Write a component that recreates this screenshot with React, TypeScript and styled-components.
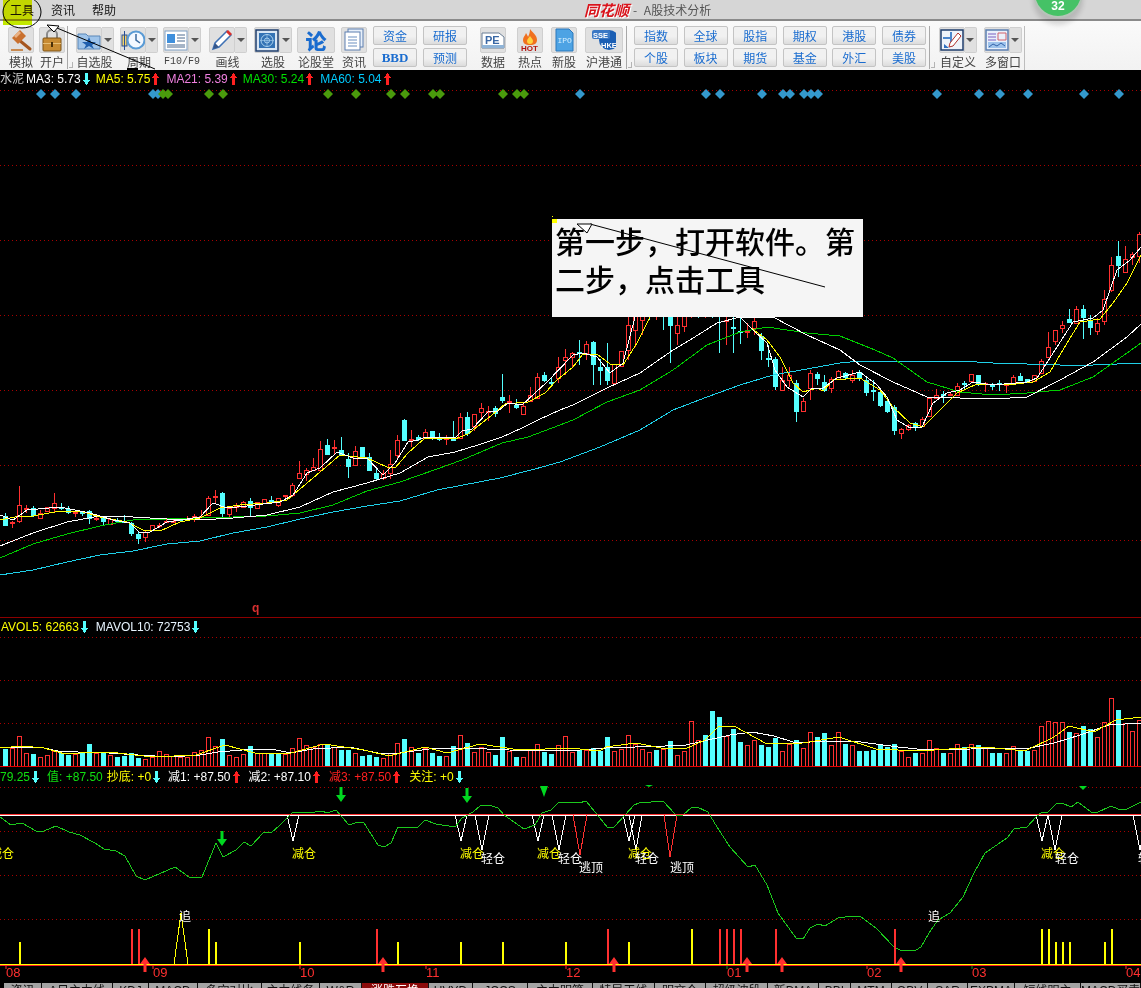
import React from "react";
import styled, {createGlobalStyle} from "styled-components";

const RED = "#ff3030";
const CYAN = "#54ffff";
const YELLOW = "#ffff00";
const SANS = `"Liberation Sans", Arial, sans-serif`;
const CJK = `"Noto Sans CJK SC", "Liberation Sans", sans-serif`;

type Candle = [0 | 1, number, number, number, number];

// red = 1, cyan = 0: wick top, body top, body bottom, wick bottom (page y)
const candles: Candle[] = [
    [0, 513, 516, 526, 526], [1, 521, 522, 524, 528], [1, 486, 505, 521, 523], [1, 505, 508, 510, 513], [0, 506, 508, 516, 517],
    [1, 510, 513, 518, 518], [1, 507, 507, 511, 511], [1, 493, 503, 508, 512], [0, 503, 507, 508, 510], [0, 506, 509, 513, 514],
    [1, 510, 512, 513, 517], [0, 511, 512, 514, 516], [0, 510, 511, 519, 524], [1, 517, 518, 519, 521], [0, 517, 518, 522, 525],
    [1, 519, 519, 524, 524], [0, 518, 520, 521, 522], [0, 515, 521, 522, 522], [0, 522, 523, 534, 536], [0, 532, 534, 539, 544],
    [1, 530, 532, 537, 542], [1, 525, 525, 530, 530], [1, 523, 525, 526, 528], [1, 518, 521, 522, 523], [1, 519, 521, 522, 523],
    [0, 519, 519, 521, 521], [1, 516, 518, 519, 520], [1, 514, 516, 519, 522], [1, 510, 516, 517, 518], [1, 496, 498, 515, 516],
    [1, 490, 496, 497, 504], [0, 492, 493, 514, 517], [1, 506, 508, 514, 519], [1, 503, 506, 508, 512], [1, 501, 502, 507, 508],
    [0, 498, 501, 508, 517], [1, 502, 502, 508, 508], [1, 499, 499, 503, 503], [0, 496, 500, 503, 504], [1, 498, 498, 505, 507],
    [1, 495, 495, 497, 499], [1, 483, 485, 495, 497], [1, 461, 473, 478, 478], [1, 468, 470, 474, 481], [1, 458, 467, 470, 470],
    [1, 441, 449, 470, 472], [0, 439, 445, 455, 455], [1, 440, 447, 449, 455], [0, 437, 450, 455, 455], [0, 453, 459, 467, 478],
    [1, 446, 451, 465, 465], [0, 447, 447, 459, 459], [0, 453, 457, 471, 471], [0, 469, 473, 479, 481], [1, 470, 473, 478, 480],
    [1, 450, 464, 473, 479], [1, 435, 440, 455, 460], [0, 419, 420, 441, 441], [1, 430, 439, 440, 447], [0, 435, 437, 440, 441],
    [1, 429, 432, 438, 439], [0, 431, 431, 439, 440], [0, 433, 438, 440, 441], [1, 435, 438, 439, 445], [0, 421, 437, 441, 441],
    [1, 413, 417, 438, 438], [0, 412, 417, 434, 436], [1, 414, 414, 426, 431], [1, 403, 408, 412, 420], [1, 406, 411, 412, 421],
    [0, 406, 408, 414, 417], [0, 374, 397, 401, 403], [1, 395, 401, 402, 413], [0, 399, 405, 408, 409], [1, 403, 406, 414, 414],
    [1, 387, 395, 401, 401], [1, 373, 377, 398, 399], [0, 372, 375, 381, 382], [0, 377, 382, 383, 387], [1, 357, 367, 378, 383],
    [1, 349, 357, 360, 375], [1, 352, 353, 357, 367], [0, 340, 352, 353, 365], [1, 341, 344, 353, 360], [0, 341, 342, 365, 385],
    [0, 359, 367, 371, 385], [0, 343, 367, 381, 385], [1, 364, 364, 383, 383], [1, 351, 351, 366, 366], [1, 317, 325, 350, 360],
    [1, 300, 305, 330, 347], [1, 290, 295, 320, 335], [0, 285, 290, 300, 320], [1, 280, 285, 305, 320], [0, 285, 290, 310, 330],
    [0, 295, 300, 326, 363], [1, 310, 325, 333, 345], [1, 300, 310, 326, 332], [1, 290, 295, 305, 318], [0, 290, 295, 305, 318],
    [1, 290, 300, 310, 318], [0, 290, 295, 305, 318], [0, 300, 305, 312, 353], [1, 300, 320, 322, 345], [0, 310, 327, 329, 353],
    [0, 312, 331, 332, 344], [1, 323, 331, 333, 338], [1, 310, 321, 328, 335], [0, 333, 336, 351, 360], [0, 345, 358, 359, 367],
    [0, 357, 359, 387, 390], [1, 367, 380, 390, 390], [1, 367, 375, 380, 387], [0, 380, 383, 412, 422], [1, 398, 401, 411, 411],
    [1, 370, 373, 388, 400], [0, 372, 374, 379, 385], [0, 375, 382, 391, 392], [1, 377, 379, 388, 393], [1, 370, 371, 379, 380],
    [0, 372, 373, 378, 379], [1, 370, 375, 380, 383], [0, 370, 372, 378, 381], [0, 378, 380, 393, 396], [0, 380, 390, 391, 401],
    [0, 390, 392, 406, 407], [0, 399, 401, 412, 413], [0, 405, 407, 431, 435], [1, 428, 429, 433, 439], [1, 424, 425, 429, 431],
    [0, 422, 423, 427, 431], [1, 417, 419, 426, 427], [1, 398, 398, 416, 416], [1, 389, 395, 398, 398], [0, 391, 394, 396, 403],
    [1, 392, 394, 395, 396], [1, 383, 386, 395, 395], [0, 381, 383, 384, 389], [1, 374, 374, 381, 381], [0, 375, 375, 385, 386],
    [1, 382, 383, 384, 392], [0, 383, 384, 387, 390], [0, 380, 383, 384, 391], [1, 383, 384, 386, 393], [1, 375, 377, 383, 383],
    [0, 373, 376, 381, 381], [0, 379, 379, 382, 382], [1, 375, 375, 381, 381], [1, 359, 361, 373, 373], [1, 332, 347, 357, 358],
    [1, 330, 330, 341, 345], [1, 321, 325, 328, 333], [0, 309, 319, 323, 323], [1, 306, 309, 323, 323], [0, 305, 309, 318, 339],
    [0, 315, 321, 328, 335], [1, 318, 323, 331, 335], [1, 290, 299, 321, 325], [1, 257, 265, 290, 292], [0, 241, 256, 266, 277],
    [1, 246, 259, 272, 273], [1, 252, 254, 257, 265], [1, 232, 234, 256, 263],
];

// bar height above the base line, positive red, negative cyan
const volumes = [
    -17, 18, 30, 13, -12, 9, 11, 15, -13, -11, 12, -13, -22, 13, -14, 11, -9, -10, -13, -8, 7, 9, 15, 12, 10, 9, 9, 14, 16, 29, 20, -27, 11, 9, 12, -20, 13, 13, -12, -12, 12, 18, 28, 21, 19, 22, -22, 19, -16, -16, 13, -10, -11, -9, 8, 13, 23, -27, 19, -13, 18, -13, -10, 10, -20, 31, -23, 14, 19, 14, -11, -29, 15, -9, 9, 17, 22, -14, -12, 21, 30,
    14, -16, 16, -18, -15, -29, 15, 17, 31, 22, 17, 14, -16, 17, -25, 11, 15, 45, 26, -31, -55, -49, 30, -37, -24, 21, 26, -21, -19, -28, 15, 22, -26, 18, 34, -29, -33, 21, 34, -22, 21, -15, -15, -16, -21, -19, -22, 15, 9, -13, 13, 26, 18, -13, 13, 22, -19, 22, -21, 19, -13, -13, 13, 20, -15, -15, 16, 40, 45, 44, 44, -34, 33, -40, -37, 29, 44, 68, -56, 43, 35, 46,
];

const ma60 = "0,575 33,570 67,562 100,555 133,551 167,544 200,541 233,533 267,527 300,519 333,512 367,506 400,501 437,490 500,478 535,469 560,462 600,447 640,430 673,410 707,397 740,385 773,375 807,369 840,363 860,361 893,361 960,361 993,363 1027,364 1060,365 1093,365 1141,363";
const ma30 = "0,558 33,544 67,534 100,526 133,520 167,519 200,518 233,517 267,516 300,513 333,505 367,491 400,482 437,469 462,460 502,443 528,437 560,425 573,420 607,402 640,390 673,370 707,345 740,332 767,327 807,333 840,336 860,344 875,350 893,358 927,382 960,392 993,395 1027,393 1060,390 1093,377 1127,353 1141,343";
const ma21 = "0,546 33,533 67,522 100,516 133,517 167,519 200,520 233,518 267,515 300,507 333,492 367,483 400,473 428,457 455,452 478,445 502,437 522,428 538,420 560,410 573,405 607,388 640,373 673,350 690,340 717,323 740,317 773,317 807,335 840,350 860,365 893,382 927,397 960,398 993,399 1027,397 1060,380 1093,362 1127,337 1141,324";
const ma5 = "0,520 20,516 33,516 60,511 80,511 100,517 127,522 143,530 160,531 180,522 200,518 220,508 240,505 267,503 287,500 313,478 340,455 367,458 387,467 395,468 408,453 425,438 455,439 468,434 492,415 505,404 528,402 545,393 557,380 573,367 583,354 597,354 610,364 623,365 637,343 650,317 670,295 720,295 740,317 750,327 767,340 780,357 793,383 803,392 817,388 823,391 833,380 860,378 880,390 893,407 910,423 923,427 940,410 957,393 977,384 1007,385 1033,382 1050,372 1067,343 1080,322 1100,319 1113,303 1127,283 1141,255";
const ma3 = "0,515 13,520 27,510 60,507 90,513 113,520 130,523 140,533 150,532 167,522 200,517 213,503 227,508 247,506 280,502 293,495 307,473 320,468 337,452 353,458 367,458 383,475 395,463 408,442 418,440 425,437 455,438 462,431 472,429 488,412 498,411 508,403 522,405 535,393 547,382 573,355 583,353 597,357 610,373 623,363 635,317 660,290 720,290 740,317 753,330 767,343 775,370 787,387 803,397 812,388 823,388 837,378 860,372 877,385 887,397 897,420 910,428 922,427 933,403 947,393 960,390 973,382 993,385 1027,382 1037,378 1057,347 1073,322 1093,318 1103,310 1117,270 1130,260 1141,247";

const volWhite = "0,747 18,747 44,748 58,751 78,752 109,753 138,755 171,757 200,755 218,752 255,749 276,750 291,753 313,749 349,747 378,753 400,753 429,749 465,748 509,750 567,751 606,748 665,746 686,745 730,735 752,732 774,736 796,743 825,741 861,742 898,747 927,750 971,749 992,748 1025,749 1054,743 1080,735 1109,725 1141,723";
const volYellow = "0,748 22,746 44,748 65,754 80,753 109,752 153,757 196,755 225,745 255,753 291,753 324,744 364,750 389,756 425,747 447,753 480,744 520,750 570,748 599,751 606,747 636,743 661,748 685,749 705,740 719,726 734,726 767,744 803,743 839,737 876,749 920,751 949,749 985,747 1025,751 1054,737 1069,726 1094,732 1116,720 1141,717";

const trend = "0,817 11,825 22,823 36,831 44,831 56,826 69,832 80,835 95,843 104,849 116,851 125,856 136,876 145,880 175,867 189,877 202,877 216,843 223,857 236,850 244,842 251,846 264,832 271,833 280,825 293,812 300,813 315,812 322,811 327,813 336,810 349,825 358,822 364,823 378,845 384,847 391,843 398,827 418,827 425,820 436,824 455,827 462,818 473,812 480,806 489,805 498,808 504,815 524,829 535,825 542,813 551,810 558,803 570,802 579,803 586,801 595,812 608,828 614,827 625,815 634,805 639,803 663,801 676,815 683,815 692,807 697,807 708,812 717,827 730,847 748,867 755,865 767,885 778,913 796,938 803,939 810,928 818,924 825,926 838,918 852,916 861,917 876,928 894,947 900,950 916,950 921,947 929,933 938,920 950,913 963,897 974,873 985,853 1007,838 1014,829 1027,827 1036,817 1042,812 1047,813 1056,804 1062,803 1071,807 1078,802 1091,812 1096,813 1111,806 1118,809 1127,809 1141,802";

const blueMarks = [41, 55, 76, 153, 158, 580, 706, 720, 762, 783, 790, 804, 811, 818, 937, 979, 1000, 1028, 1084, 1119];
const greenMarks = [163, 168, 209, 223, 328, 356, 391, 405, 433, 440, 503, 517, 524];

const spikes: [number, number, number, number, string][] = [
    [287, 293, 299, 841, "#fff"], [455, 461, 467, 841, "#fff"], [475, 482, 489, 850, "#fff"], [532, 538, 544, 841, "#fff"],
    [552, 559, 566, 850, "#fff"], [573, 580, 587, 855, RED], [623, 629, 635, 841, "#fff"], [629, 636, 642, 850, "#fff"],
    [664, 670, 677, 857, RED], [1036, 1042, 1048, 841, "#fff"], [1048, 1055, 1062, 850, "#fff"], [1133, 1140, 1147, 850, "#fff"],
];

const marks: [string, number, number, string][] = [
    ["减仓", -10, 853, YELLOW], ["减仓", 292, 853, YELLOW], ["减仓", 460, 853, YELLOW], ["减仓", 537, 853, YELLOW], ["减仓", 628, 853, YELLOW], ["减仓", 1041, 853, YELLOW],
    ["轻仓", 481, 858, "#fff"], ["轻仓", 558, 858, "#fff"], ["轻仓", 635, 858, "#fff"], ["轻仓", 1055, 858, "#fff"], ["轻仓", 1138, 858, "#fff"],
    ["逃顶", 579, 867, "#fff"], ["逃顶", 670, 867, "#fff"], ["追", 179, 916, "#fff"], ["追", 928, 916, "#fff"],
];

const downArrows: [number, number, number][] = [[222, 831, 15], [341, 787, 15], [467, 788, 15], [544, 786, 11], [649, 785, 2], [1083, 786, 4]];
const upArrows = [145, 383, 614, 747, 782, 901];

const signalBars: [number, number, string][] = [
    [131, 929, RED], [138, 929, RED], [19, 942, YELLOW], [208, 929, YELLOW], [215, 942, YELLOW], [299, 942, YELLOW], [376, 929, RED], [397, 942, YELLOW],
    [460, 942, YELLOW], [502, 942, YELLOW], [565, 942, YELLOW], [607, 929, RED], [628, 942, YELLOW], [691, 929, YELLOW], [719, 929, RED], [726, 929, RED],
    [733, 929, RED], [740, 929, RED], [775, 929, RED], [894, 929, RED], [1041, 929, YELLOW], [1048, 929, YELLOW], [1055, 942, YELLOW], [1062, 942, YELLOW],
    [1069, 942, YELLOW], [1104, 942, YELLOW], [1111, 929, YELLOW],
];

const axisLabels: [string, number, string][] = [["08", 6, RED], ["09", 153, RED], ["10", 300, RED], ["11", 426, RED], ["12", 566, RED], ["01", 727, "#1c9a1c"], ["02", 867, RED], ["03", 972, "#1c9a1c"], ["04", 1126, RED]];

const tabs: [string, number][] = [
    ["资讯", 38], ["A日主力线", 71], ["KDJ", 36], ["MACD", 49], ["多空对比", 64], ["主力线务", 58], ["W&R", 42], ["涨跌互换", 67], ["HVYD", 44], ["JCCS", 55], ["主力明笔", 65],
    ["特导天线", 62], ["明文仓", 51], ["超级波段", 62], ["新DMA", 51], ["BBI", 32], ["MTM", 41], ["OBV", 36], ["SAR", 40], ["EXPMA", 47], ["短线明主", 66], ["MACD买卖", 60],
];

const GlobalStyle = createGlobalStyle`
    html, body {
        margin: 0;
        padding: 0;
        background: #000;
    }
`

const Page = styled.div`
    position: relative;
    display: flex;
    flex-direction: column;
    width: 1141px;
    height: 988px;
    overflow: hidden;
    background: #000;
    font-family: ${SANS};
`

const MenuBar = styled.div`
    display: flex;
    align-items: center;
    flex: none;
    box-sizing: border-box;
    height: 21px;
    padding-left: 10px;
    background: #d6d6d6;
    border-bottom: 2px solid #8a8a8a;
`

const MenuItem = styled.span`
    width: 24px;
    margin-right: 17px;
    font: 12px/14px ${CJK};
    color: #151515;
    white-space: nowrap;
`

const Brand = styled.span`
    margin-left: 451px;
    font: italic 700 15px/16px ${CJK};
    color: #d9141c;
    text-shadow: 1px 1px 0 #fff;
    white-space: nowrap;
`

const AppTitle = styled.span`
    margin-left: 4px;
    font: 12px/14px ${CJK};
    word-spacing: 4px;
    color: #555;
    white-space: nowrap;
`

const Toolbar = styled.div`
    display: flex;
    align-items: flex-start;
    flex: none;
    box-sizing: border-box;
    height: 49px;
    padding: 5px 0 0 8px;
    background: linear-gradient(#fafafa, #f2f2f2);
`

const ToolItem = styled.div<{ $w: number; $gap?: number }>`
    display: flex;
    flex-direction: column;
    align-items: center;
    flex: none;
    width: ${p => p.$w}px;
    margin-left: ${p => p.$gap ?? 0}px;
    padding-top: 1px;
`

const ToolFace = styled.div`
    display: flex;
    box-sizing: border-box;
    width: 100%;
    height: 26px;
`

const ToolMain = styled.div`
    display: flex;
    flex: 1;
    align-items: center;
    justify-content: center;
    box-sizing: border-box;
    background: #e0e0e0;
    border: 1px solid #cfcfcf;
    border-radius: 2px;
`

const ToolCaret = styled.div`
    display: flex;
    flex: none;
    align-items: center;
    justify-content: center;
    box-sizing: border-box;
    width: 12px;
    background: #e0e0e0;
    border: 1px solid #cfcfcf;
    border-left: none;
    border-radius: 0 2px 2px 0;

    &::after {
        content: "";
        border-top: 4px solid #555;
        border-left: 4px solid transparent;
        border-right: 4px solid transparent;
    }
`

const ToolLabel = styled.span<{ $mono?: boolean }>`
    margin-top: 1px;
    font: ${p => (p.$mono ? `10px/16px "Liberation Mono", monospace` : `12px/15px ${CJK}`)};
    color: #444;
    white-space: nowrap;
`

const Divider = styled.div<{ $gap: number }>`
    position: relative;
    flex: none;
    box-sizing: border-box;
    width: 5px;
    height: 43px;
    margin-left: ${p => p.$gap}px;
    border-left: 1px solid #a8a8a8;

    &::after {
        content: "";
        position: absolute;
        left: 1px;
        bottom: 1px;
        width: 3px;
        height: 5px;
        border-right: 1px solid #b4b4b4;
        border-bottom: 1px solid #b4b4b4;
    }
`

const QuickGrid = styled.div<{ $cols: number; $gap: number; $colGap: number }>`
    display: grid;
    flex: none;
    grid-template-columns: repeat(${p => p.$cols}, 44px);
    grid-auto-rows: 19px;
    gap: 3px ${p => p.$colGap}px;
    margin-left: ${p => p.$gap}px;
`

const QuickButton = styled.div<{ $strong?: boolean }>`
    display: flex;
    align-items: center;
    justify-content: center;
    box-sizing: border-box;
    background: linear-gradient(#f1f1f1 55%, #dcdcdc);
    border: 1px solid #c4c4c4;
    border-radius: 2px;
    color: #1a6ccf;
    font: ${p => (p.$strong ? `700 13px/16px "Liberation Serif", serif` : `12px/16px ${CJK}`)};
`

const ToolbarEnd = styled.div`
    flex: none;
    width: 1px;
    height: 44px;
    margin-left: 2px;
    background: #bdbdbd;
`

const Pane = styled.div<{ $h: number; $rule?: boolean }>`
    position: relative;
    flex: none;
    height: ${p => p.$h}px;
    background: #000;
    border-bottom: ${p => (p.$rule ? "1px solid #8c0000" : "none")};
`

const Plot = styled.svg`
    display: block;
    width: 1141px;
    height: 100%;
`

const Legend = styled.div<{ $top: number }>`
    position: absolute;
    top: ${p => p.$top}px;
    left: 0;
    display: flex;
    align-items: center;
    height: 16px;
    white-space: nowrap;
`

const Reading = styled.span<{ $color: string; $gap?: number }>`
    display: inline-flex;
    align-items: center;
    margin-left: ${p => p.$gap ?? 0}px;
    color: ${p => p.$color};
    font: 12px/16px ${SANS}, "Noto Sans CJK SC";
`

const TrendMark = styled.svg`
    display: block;
    flex: none;
    width: 7px;
    height: 12px;
    margin-left: 2px;
`

const TabStrip = styled.div`
    display: flex;
    flex: none;
    padding-left: 4px;
    height: 20px;
`

const Tab = styled.div<{ $w: number; $active?: boolean }>`
    flex: none;
    box-sizing: border-box;
    width: ${p => p.$w}px;
    padding-top: 0;
    background: ${p => (p.$active ? "#8b0a0a" : "#a4a4a4")};
    border-right: 1px solid #111;
    color: ${p => (p.$active ? "#fff" : "#111")};
    font: 12px/17px ${SANS}, "Noto Sans CJK SC";
    text-align: center;
    white-space: nowrap;
    overflow: hidden;
`

const Note = styled.div`
    position: absolute;
    left: 552px;
    top: 219px;
    box-sizing: border-box;
    width: 311px;
    height: 98px;
    padding: 2px 0 0 3px;
    background: #f5f5f5;
    color: #000;
    font: 500 30px/38px ${CJK};
`

const InkLayer = styled.svg`
    position: absolute;
    inset: 0;
    width: 1141px;
    height: 988px;
    pointer-events: none;
`

const Highlight = styled.rect`
    fill: #c2e800;
    mix-blend-mode: darken;
`

const Badge = styled.div`
    position: absolute;
    left: 1033px;
    top: -32px;
    display: flex;
    align-items: flex-end;
    justify-content: center;
    box-sizing: border-box;
    width: 50px;
    height: 50px;
    padding-bottom: 3px;
    background: #45c266;
    border: 2px solid #b5c4b8;
    border-radius: 50%;
    box-shadow: 0 7px 5px rgba(0, 0, 0, 0.14);
    color: #fff;
    font: 700 12px/14px ${SANS};
`

const BigGlyph = styled.span`
    font: 900 21px/24px ${CJK};
    color: #1a6ccf;
`

const Trend = ({up}: { up?: boolean }) => (
    <TrendMark viewBox="0 0 7 12" shapeRendering="crispEdges">
        {up
            ? <path d="M3.5 0 L7 5 H5 V12 H2 V5 H0 Z" fill="#ff2020"/>
            : <path d="M3.5 12 L7 7 H5 V0 H2 V7 H0 Z" fill={CYAN}/>}
    </TrendMark>
);

const Icon = ({children}: { children: React.ReactNode }) => (
    <svg width="24" height="24" viewBox="0 0 24 24">{children}</svg>
);

const icons: Record<string, React.ReactNode> = {
    gavel: <Icon>
        <path d="M10 12 L21 21" stroke="#a5561f" strokeWidth="3" strokeLinecap="round"/>
        <path d="M3 10 L11 2 L17 8 L9 16 Z" fill="#c9702e"/>
        <path d="M5 8 L10 3 L12 5 L7 10 Z" fill="#e9b184"/>
        <path d="M2 22 H14" stroke="#c98a50" strokeWidth="2"/>
    </Icon>,
    lock: <Icon>
        <path d="M7 11 V6 a5 4 0 0 1 10 0 V11" fill="none" stroke="#8b8b8b" strokeWidth="2"/>
        <rect x="3" y="10" width="18" height="13" rx="1" fill="#c88b32" stroke="#7d5316"/>
        <rect x="3" y="15" width="18" height="1" fill="#e7bd73"/>
        <rect x="11" y="14" width="2" height="5" fill="#4a2f08"/>
    </Icon>,
    folder: <Icon>
        <path d="M1 6 H9 L11 8 H23 V21 H1 Z" fill="#9fc4ea" stroke="#5a87b8"/>
        <path d="M12 9 L14 14 H19 L15 17 L17 21 L12 18 L7 21 L9 17 L5 14 H10 Z" fill="#1f5fae"/>
    </Icon>,
    clock: <Icon>
        <rect x="1" y="7" width="5" height="11" fill="#f3d26b" stroke="#274f95"/>
        <path d="M3.5 3 V22" stroke="#274f95"/>
        <circle cx="15" cy="12" r="8.5" fill="#f3f8ff" stroke="#5a9bd5" strokeWidth="2"/>
        <path d="M15 6 V12 L19 15" fill="none" stroke="#3c6a9e" strokeWidth="1.5"/>
    </Icon>,
    news: <Icon>
        <rect x="1" y="3" width="22" height="19" fill="#fff" stroke="#7f9fc4"/>
        <rect x="3" y="6" width="8" height="9" fill="#3f8fdc"/>
        <path d="M13 7 H21 M13 10 H21 M13 13 H21 M3 17 H21 M3 19 H21" stroke="#4d6a8f"/>
    </Icon>,
    pencil: <Icon>
        <path d="M3 21 L5 15 L17 3 L21 7 L9 19 Z" fill="#fff" stroke="#3f72b5" strokeWidth="1.5"/>
        <path d="M16 4 L20 8 L22 6 L18 2 Z" fill="#d9302c"/>
        <path d="M3 21 L5 15 L9 19 Z" fill="#35568a"/>
    </Icon>,
    radar: <Icon>
        <rect x="1" y="2" width="22" height="21" fill="#d9e6f4" stroke="#1f3e6c" strokeWidth="1.5"/>
        <rect x="4" y="5" width="16" height="15" fill="#3473b5"/>
        <circle cx="12" cy="12.5" r="6" fill="none" stroke="#a9d0ee"/>
        <circle cx="12" cy="12.5" r="2.5" fill="none" stroke="#a9d0ee"/>
        <path d="M12 6 V19 M5 12.5 H19" stroke="#a9d0ee" strokeWidth=".6"/>
    </Icon>,
    docs: <Icon>
        <rect x="6" y="1" width="15" height="18" fill="#e8f0fa" stroke="#5c7fb0"/>
        <rect x="3" y="4" width="15" height="18" fill="#fff" stroke="#5c7fb0"/>
        <path d="M6 9 H15 M6 12 H15 M6 15 H15 M6 18 H15" stroke="#6b8fc0"/>
    </Icon>,
    pe: <Icon>
        <path d="M1 5 H18 L23 9 V20 H1 Z" fill="#fff" stroke="#6a7f96"/>
        <rect x="1" y="17" width="22" height="3" fill="#8fb4d8"/>
        <text x="4" y="16" fontFamily="Liberation Sans" fontWeight="700" fontSize="11" fill="#3a68a5">PE</text>
    </Icon>,
    hot: <Icon>
        <path d="M12 1 C15 5 19 7 19 12 C19 15 17 17 12 17 C7 17 5 15 5 12 C5 9 7 8 8 5 C9 7 10 8 10 9 C11 7 12 4 12 1 Z" fill="#f0701e"/>
        <path d="M12 8 C13 10 15 11 15 13 C15 15 14 16 12 16 C10 16 9 15 9 13 C9 11 11 10 12 8 Z" fill="#ffd23f"/>
        <text x="3" y="23" fontFamily="Liberation Sans" fontWeight="700" fontSize="8" fill="#b3140f">HOT</text>
    </Icon>,
    ipo: <Icon>
        <path d="M4 1 H17 L21 5 V23 H4 Z" fill="#4da3e4" stroke="#2c78bb"/>
        <text x="5.5" y="15" fontFamily="Liberation Mono" fontSize="8" fill="#d7f0ff">IPO</text>
    </Icon>,
    sse: <Icon>
        <circle cx="17" cy="12" r="10" fill="#1c5fb4"/>
        <rect x="0" y="2" width="18" height="9" rx="2" fill="#3b78c4"/>
        <text x="1" y="9.5" fontFamily="Liberation Sans" fontWeight="700" fontSize="7.5" fill="#fff">SSE</text>
        <text x="9" y="20" fontFamily="Liberation Sans" fontWeight="700" fontSize="7.5" fill="#fff">HKE</text>
    </Icon>,
    custom: <Icon>
        <rect x="1" y="2" width="22" height="20" fill="#eef3fa" stroke="#1f3e6c" strokeWidth="1.5"/>
        <path d="M3 10 H11 M11 4 V14" stroke="#4b86cc" strokeWidth="2"/>
        <path d="M9 19 L10 15 L18 5 L21 8 L13 18 Z" fill="#fff" stroke="#b0322c"/>
        <path d="M4 16 L9 20 H4 Z" fill="#2f6fc0"/>
    </Icon>,
    windows: <Icon>
        <rect x="1" y="2" width="22" height="20" fill="#eaf0fb" stroke="#5c7fb0" strokeWidth="1.5"/>
        <path d="M3 6 H11 M3 9 H11 M3 12 H11" stroke="#7a5ec0"/>
        <path d="M13 5 H21 V12 H13 Z" fill="none" stroke="#d0606a"/>
        <rect x="3" y="14" width="18" height="6" fill="#9ec3ec"/>
        <path d="M4 19 L8 16 L12 18 L16 15 L20 18" fill="none" stroke="#3362a8"/>
    </Icon>,
};

const Tool = (props: { label: string; icon: string; w: number; gap?: number; menu?: boolean; mono?: boolean; children?: React.ReactNode }) => (
    <ToolItem $w={props.w} $gap={props.gap}>
        <ToolFace>
            <ToolMain>{props.children ?? icons[props.icon]}</ToolMain>
            {props.menu && <ToolCaret/>}
        </ToolFace>
        <ToolLabel $mono={props.mono}>{props.label}</ToolLabel>
    </ToolItem>
);

const MainPlot = () => (
    <Plot viewBox="0 70 1141 547" preserveAspectRatio="none">
        {[90, 165, 240, 315, 390, 465, 540].map(y => (
            <line key={y} x1="0" x2="1141" y1={y + .5} y2={y + .5} stroke="#a80000" strokeDasharray="1 3"/>
        ))}
        {blueMarks.map(x => <polygon key={x} points={`${x - 5},94 ${x},89 ${x + 5},94 ${x},99`} fill="#3498cc"/>)}
        {greenMarks.map(x => <polygon key={x} points={`${x - 5},94 ${x},89 ${x + 5},94 ${x},99`} fill="#4a9a0c"/>)}
        {candles.map(([red, wickTop, top, bottom, wickBottom], i) => {
            const x = 5 + 7 * i;
            const color = red ? RED : CYAN;
            const flat = bottom - top < 3;
            return (
                <g key={i}>
                    <line x1={x + .5} x2={x + .5} y1={wickTop} y2={wickBottom} stroke={color}/>
                    {red && !flat
                        ? <rect x={x - 1.5} y={top + .5} width={4} height={bottom - top} fill="#000" stroke={color}/>
                        : <rect x={x - 2} y={top} width={5} height={Math.max(bottom - top, 2)} fill={color}/>}
                </g>
            );
        })}
        <g fill="none" shapeRendering="crispEdges">
            <polyline points={ma60} stroke="#1fd0e8"/>
            <polyline points={ma30} stroke="#00cc00"/>
            <polyline points={ma21} stroke="#ffffff"/>
            <polyline points={ma5} stroke={YELLOW}/>
            <polyline points={ma3} stroke="#ffffff"/>
        </g>
        <text x="252" y="612" fontFamily="Liberation Sans" fontWeight="700" fontSize="12" fill="#d83030">q</text>
    </Plot>
);

const VolumePlot = () => (
    <Plot viewBox="0 618 1141 149" preserveAspectRatio="none">
        {[637, 680, 723].map(y => (
            <line key={y} x1="0" x2="1141" y1={y + .5} y2={y + .5} stroke="#a80000" strokeDasharray="1 3"/>
        ))}
        {volumes.map((h, i) => {
            const x = 5 + 7 * i;
            return h > 0
                ? <rect key={i} x={x - 1.5} y={766 - h + .5} width={4} height={h} fill="none" stroke={RED}/>
                : <rect key={i} x={x - 2} y={766 + h} width={5} height={-h} fill={CYAN}/>;
        })}
        <rect x="0" y="766" width="1141" height="1" fill="#e00000"/>
        <g shapeRendering="crispEdges" fill="none">
            <polyline points={volWhite} stroke="#fff"/>
            <polyline points={volYellow} stroke={YELLOW}/>
        </g>
    </Plot>
);

const IndicatorPlot = () => (
    <Plot viewBox="0 767 1141 216" preserveAspectRatio="none">
        {[787, 831, 875, 919].map(y => (
            <line key={y} x1="0" x2="1141" y1={y + .5} y2={y + .5} stroke="#a80000" strokeDasharray="1 3"/>
        ))}
        <g shapeRendering="crispEdges">
            <rect x="0" y="815" width="1141" height="1" fill="#fff"/>
            {spikes.map(([l, c, r, y, color]) => (
                <polyline key={l} points={`${l},815 ${c},${y} ${r},815`} fill="none" stroke={color}/>
            ))}
            <polyline points={trend} fill="none" stroke="#1cc81c"/>
            <rect x="0" y="814" width="1141" height="1" fill="#ff3030"/>
            {signalBars.map(([x, y, color]) => <rect key={x} x={x} y={y} width={2} height={964 - y} fill={color}/>)}
            <polyline points="174,964 181,913 188,964" fill="none" stroke={YELLOW}/>
            <rect x="0" y="965" width="1141" height="1" fill="#ff2020"/>
            <rect x="0" y="964" width="1141" height="1" fill={YELLOW}/>
        </g>
        {downArrows.map(([x, y, h]) => (
            <path key={x} fill="#00d820"
                  d={h > 12
                      ? `M${x - 1.5} ${y} H${x + 1.5} V${y + 8} H${x + 5} L${x} ${y + h} L${x - 5} ${y + 8} H${x - 1.5} Z`
                      : `M${x - 4} ${y} H${x + 4} L${x} ${y + h} Z`}/>
        ))}
        {upArrows.map(x => (
            <path key={x} fill="#ff3030" d={`M${x} 957 L${x + 5} 964 H${x + 1.5} V972 H${x - 1.5} V964 H${x - 5} Z`}/>
        ))}
        {marks.map(([word, x, y, color]) => (
            <text key={`${word}${x}`} x={x} y={y + 5} fontFamily="Noto Sans CJK SC" fontSize="12" fill={color}>{word}</text>
        ))}
        {axisLabels.map(([text, x, color]) => (
            <g key={text}>
                <line x1={x} x2={x} y1="966" y2="969" stroke={color}/>
                <text x={x} y="977" fontFamily="Liberation Sans" fontSize="13" fill={RED}>{text}</text>
            </g>
        ))}
    </Plot>
);

const App = () => {
    return (
        <Page>
            <GlobalStyle/>
            <MenuBar>
                <MenuItem>工具</MenuItem>
                <MenuItem>资讯</MenuItem>
                <MenuItem>帮助</MenuItem>
                <Brand>同花顺</Brand>
                <AppTitle>- A股技术分析</AppTitle>
            </MenuBar>

            <Toolbar>
                <Tool label="模拟" icon="gavel" w={26}/>
                <Tool label="开户" icon="lock" w={26} gap={5}/>
                <Divider $gap={2}/>
                <Tool label="自选股" icon="folder" w={37} gap={4} menu/>
                <Tool label="周期" icon="clock" w={38} gap={7} menu/>
                <Tool label="F10/F9" icon="news" w={38} gap={5} menu mono/>
                <Tool label="画线" icon="pencil" w={37} gap={8} menu/>
                <Tool label="选股" icon="radar" w={38} gap={8} menu/>
                <Tool label="论股堂" icon="" w={38} gap={5}><BigGlyph>论</BigGlyph></Tool>
                <Tool label="资讯" icon="docs" w={26} gap={6}/>
                <QuickGrid $cols={2} $gap={6} $colGap={6}>
                    <QuickButton>资金</QuickButton>
                    <QuickButton>研报</QuickButton>
                    <QuickButton $strong>BBD</QuickButton>
                    <QuickButton>预测</QuickButton>
                </QuickGrid>
                <Tool label="数据" icon="pe" w={26} gap={13}/>
                <Tool label="热点" icon="hot" w={26} gap={11}/>
                <Tool label="新股" icon="ipo" w={26} gap={8}/>
                <Tool label="沪港通" icon="sse" w={38} gap={8}/>
                <Divider $gap={3}/>
                <QuickGrid $cols={6} $gap={3} $colGap={5.6}>
                    {["指数", "全球", "股指", "期权", "港股", "债券", "个股", "板块", "期货", "基金", "外汇", "美股"].map(name => (
                        <QuickButton key={name}>{name}</QuickButton>
                    ))}
                </QuickGrid>
                <Divider $gap={3}/>
                <Tool label="自定义" icon="custom" w={38} gap={5} menu/>
                <Tool label="多窗口" icon="windows" w={38} gap={7} menu/>
                <ToolbarEnd/>
            </Toolbar>

            <Pane $h={547} $rule>
                <MainPlot/>
                <Legend $top={1}>
                    <Reading $color="#d0d0d0">水泥</Reading>
                    <Reading $color="#ffffff" $gap={2}>MA3: 5.73<Trend/></Reading>
                    <Reading $color={YELLOW} $gap={6}>MA5: 5.75<Trend up/></Reading>
                    <Reading $color="#f080e0" $gap={7}>MA21: 5.39<Trend up/></Reading>
                    <Reading $color="#00e000" $gap={6}>MA30: 5.24<Trend up/></Reading>
                    <Reading $color="#00ccff" $gap={7}>MA60: 5.04<Trend up/></Reading>
                </Legend>
            </Pane>

            <Pane $h={149}>
                <VolumePlot/>
                <Legend $top={1}>
                    <Reading $color={YELLOW} $gap={1}>AVOL5: 62663<Trend/></Reading>
                    <Reading $color="#e8f4ff" $gap={8}>MAVOL10: 72753<Trend/></Reading>
                </Legend>
            </Pane>

            <Pane $h={216}>
                <IndicatorPlot/>
                <Legend $top={2}>
                    <Reading $color="#10e010">79.25<Trend/></Reading>
                    <Reading $color="#10e010" $gap={8}>值: +87.50</Reading>
                    <Reading $color={YELLOW} $gap={4}>抄底: +0<Trend/></Reading>
                    <Reading $color="#ffffff" $gap={8}>减1: +87.50<Trend up/></Reading>
                    <Reading $color="#ffffff" $gap={9}>减2: +87.10<Trend up/></Reading>
                    <Reading $color="#ff2020" $gap={9}>减3: +87.50<Trend up/></Reading>
                    <Reading $color={YELLOW} $gap={9}>关注: +0<Trend/></Reading>
                </Legend>
            </Pane>

            <TabStrip>
                {tabs.map(([name, w]) => (
                    <Tab key={name} $w={w} $active={name === "涨跌互换"}>{name}</Tab>
                ))}
            </TabStrip>

            <Note>第一步，打开软件。第二步，点击工具</Note>

            <InkLayer viewBox="0 0 1141 988">
                <Highlight x="3" y="0" width="29" height="25"/>
                <ellipse cx="22" cy="12" rx="19" ry="16" fill="none" stroke="#000"/>
                <polyline points="155,69 57,28" fill="none" stroke="#000"/>
                <polygon points="47,25 59,26 54,32" fill="#fff" stroke="#000"/>
                <rect x="127" y="68" width="11" height="2" fill="#000"/>
                <rect x="552" y="219" width="5" height="4" fill={YELLOW}/>
                <rect x="552" y="216" width="1" height="1" fill={YELLOW}/>
                <polyline points="825,287 590,224" fill="none" stroke="#000"/>
                <polygon points="577,224 592,224 587,233" fill="#fff" stroke="#000"/>
            </InkLayer>

            <Badge>32</Badge>
        </Page>
    );
};

export default App;
